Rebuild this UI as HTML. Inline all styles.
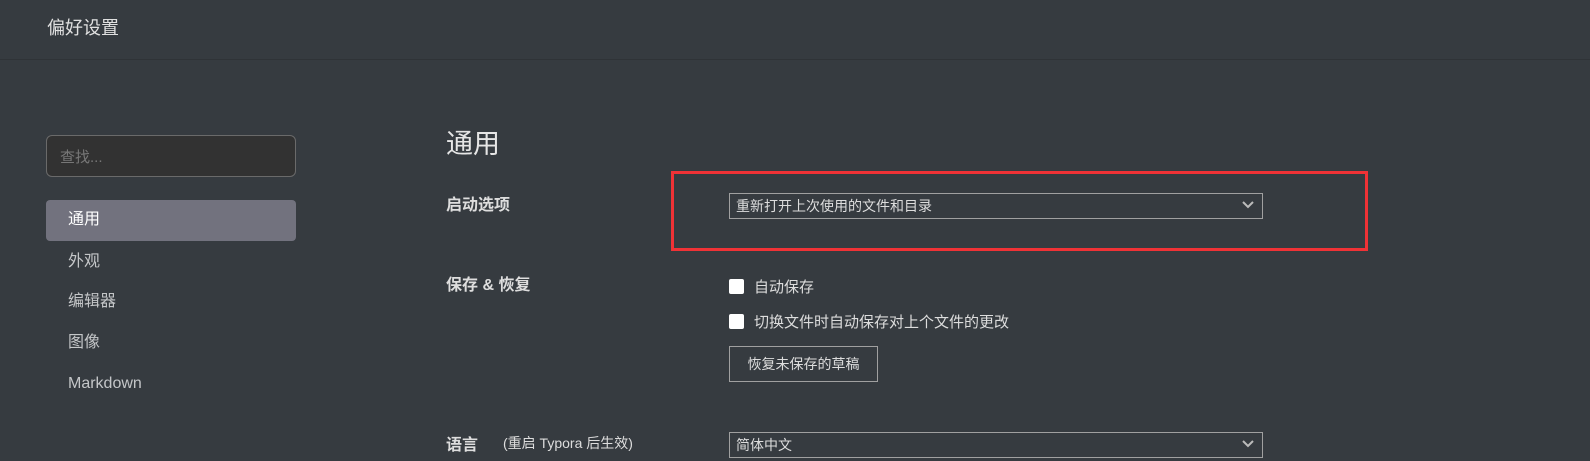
<!DOCTYPE html>
<html><head><meta charset="utf-8"><style>
*{margin:0;padding:0;box-sizing:border-box}
body{width:1590px;height:461px;background:#363b40;overflow:hidden;font-family:"Liberation Sans","Noto Sans CJK SC",sans-serif;color:#ccc;position:relative}
.a{position:absolute;white-space:nowrap}
.hdr{position:absolute;left:0;top:0;width:1590px;height:60px;border-bottom:1px solid #2f3337;background:#363b40}
.nav{font-size:16px;color:#c4c6c8;line-height:20px}
.lbl{font-size:16px;font-weight:bold;color:#dedede}
.sel{position:absolute;border:1px solid #a0a0a0;height:26px;font-size:14px;color:#ddd;padding-left:6px;line-height:24px}
.cb{position:absolute;width:15px;height:15px;background:#fff;border-radius:2px}
.chev{position:absolute;right:8px;top:7px}
</style></head><body>
<div class="hdr"></div>
<div class="a" style="left:47px;top:14px;font-size:18px;color:#e0e0e0">偏好设置</div>
<div class="a" style="left:46px;top:135px;width:250px;height:42px;border:1px solid #6a6a6a;border-radius:6px;background:#323232"></div>
<div class="a" style="left:60px;top:146px;font-size:15px;color:#777">查找...</div>
<div class="a" style="left:46px;top:200px;width:250px;height:41px;border-radius:4px;background:#72727e"></div>
<div class="a nav" style="left:68px;top:210px;color:#fff">通用</div>
<div class="a nav" style="left:68px;top:252px">外观</div>
<div class="a nav" style="left:68px;top:292px">编辑器</div>
<div class="a nav" style="left:68px;top:333px">图像</div>
<div class="a nav" style="left:68px;top:374px">Markdown</div>
<div class="a" style="left:446px;top:122px;font-size:27px;color:#e6e6e6">通用</div>
<div class="a lbl" style="left:446px;top:191px">启动选项</div>
<div class="a lbl" style="left:446px;top:271px">保存 &amp; 恢复</div>
<div class="a lbl" style="left:446px;top:431px">语言</div>
<div class="a" style="left:503px;top:433px;font-size:14px;color:#ddd">(重启 Typora 后生效)</div>
<div class="a" style="left:671px;top:171px;width:697px;height:80px;border:3px solid #f03236"></div>
<div class="sel" style="left:729px;top:193px;width:534px">重新打开上次使用的文件和目录<svg class="chev" width="12" height="8" viewBox="0 0 12 8"><path d="M1 1l5 5 5-5" stroke="#bbb" stroke-width="2" fill="none"/></svg></div>
<div class="cb" style="left:729px;top:279px"></div>
<div class="a" style="left:754px;top:276px;font-size:15px;color:#ddd">自动保存</div>
<div class="cb" style="left:729px;top:314px"></div>
<div class="a" style="left:754px;top:311px;font-size:15px;color:#ddd">切换文件时自动保存对上个文件的更改</div>
<div class="a" style="left:729px;top:346px;width:149px;height:36px;border:1px solid #a0a0a0;font-size:14px;color:#ddd;text-align:center;line-height:34px">恢复未保存的草稿</div>
<div class="sel" style="left:729px;top:432px;width:534px">简体中文<svg class="chev" width="12" height="8" viewBox="0 0 12 8"><path d="M1 1l5 5 5-5" stroke="#bbb" stroke-width="2" fill="none"/></svg></div>
</body></html>
